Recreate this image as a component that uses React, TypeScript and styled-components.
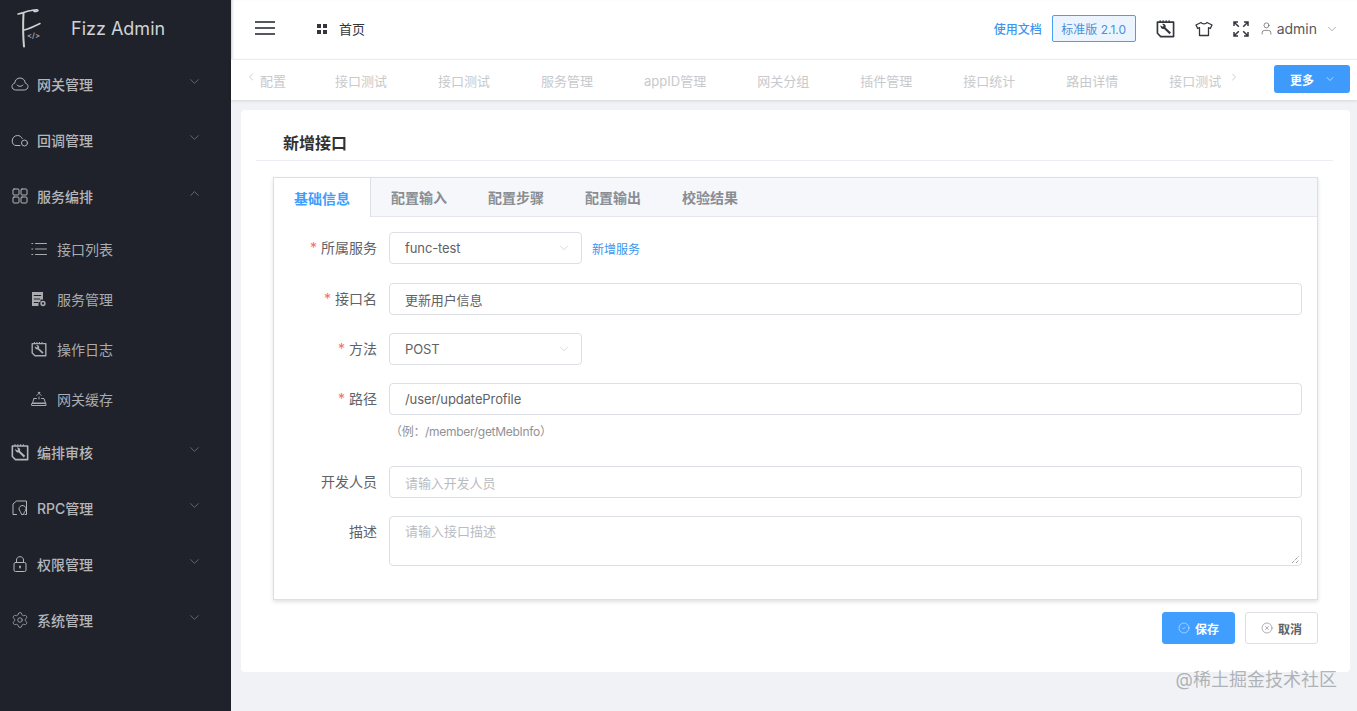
import React from 'react'
import styled, { createGlobalStyle } from 'styled-components'
import { ChevronDown, ChevronUp, ChevronLeft, ChevronRight, User, CircleCheck, CircleX, Settings } from 'lucide-react'

const GlobalStyle = createGlobalStyle`
  html, body { margin: 0; padding: 0; height: 100%; }
  body {
    font-family: Inter, "Noto Sans CJK SC", "Liberation Sans", sans-serif;
    font-size: 13px;
    color: #4a4d55;
    background: #f0f2f5;
  }
  * { box-sizing: border-box; }
`

const Shell = styled.div`
  display: flex;
  width: 1357px;
  height: 711px;
  overflow: hidden;
  position: relative;
`
const Sidebar = styled.aside`
  width: 231px;
  flex: none;
  background: #1f222a;
  color: #bfc1c5;
`
const Brand = styled.div`
  height: 56px;
  display: flex;
  align-items: center;
  padding-left: 17px;
  gap: 30px;
  font-size: 18px;
  color: #d0d2d5;
`
const MenuRow = styled.div`
  height: 56px;
  display: flex;
  align-items: center;
  padding-left: 11px;
  padding-right: 29px;
  gap: 8px;
  font-size: 14px;
  font-weight: 500;
  color: #b4b6ba;
  svg { flex: none; }
`
const MenuLabel = styled.span`
  flex: 1;
`
const SubRow = styled.div`
  height: 50px;
  display: flex;
  align-items: center;
  padding-left: 31px;
  gap: 10px;
  font-size: 14px;
  color: #a9abaf;
`
const MenuChevron = styled.span`
  display: flex;
  color: #8b8e94;
  margin-top: -6px;
`
const Main = styled.main`
  flex: 1;
  min-width: 0;
  display: flex;
  flex-direction: column;
`
const Header = styled.header`
  height: 60px;
  background: #fff;
  display: flex;
  align-items: center;
  padding: 0 18px 2px 24px;
  border-bottom: 1px solid #f0f1f3;
  box-shadow: inset 3px 0 3px -2px #c9cacc;
`
const Burger = styled.div`
  width: 20px;
  height: 14px;
  border-top: 2px solid #55585e;
  border-bottom: 2px solid #55585e;
  position: relative;
  margin: 0 42px 2px 0;
  &::after {
    content: '';
    position: absolute;
    left: 0;
    right: 0;
    top: 4px;
    height: 2px;
    background: #55585e;
  }
`
const HomeDots = styled.div`
  display: grid;
  grid-template-columns: 4px 4px;
  gap: 2px;
  margin-right: 12px;
  span { width: 4px; height: 4px; background: #33363c; }
`
const HomeText = styled.span`
  font-size: 13px;
  color: #33363c;
`
const HeaderRight = styled.div`
  margin-left: auto;
  display: flex;
  align-items: center;
`
const DocLink = styled.a`
  font-size: 12px;
  font-weight: 500;
  color: #3c95f0;
  margin-right: 10px;
`
const VersionTag = styled.div`
  width: 84px;
  height: 27px;
  border: 1px solid #4a9ff2;
  border-radius: 2px;
  background: #ecf5ff;
  color: #4a8fd8;
  font-size: 12px;
  display: flex;
  align-items: center;
  justify-content: center;
  margin-right: 20px;
`
const HeaderIcon = styled.span<{ $gap?: number }>`
  display: flex;
  color: #33363c;
  margin-right: ${p => p.$gap ?? 20}px;
`
const UserName = styled.span`
  font-size: 14px;
  color: #55585e;
  margin: 0 8px 0 3px;
`
const TabStrip = styled.div`
  height: 40px;
  background: #fff;
  display: flex;
  align-items: center;
  padding: 0 7px 0 14px;
  box-shadow: 0 1px 3px rgba(0, 0, 0, 0.12);
  position: relative;
`
const StripArrow = styled.span`
  display: flex;
  color: #9a9ca1;
  flex: none;
  margin-top: -6px;
`
const StripList = styled.div`
  display: flex;
  gap: 51px;
  width: 968px;
  margin-left: 3px;
  flex: none;
`
const StripItem = styled.span`
  font-size: 13px;
  color: #c8c9cc;
  white-space: nowrap;
  flex: none;
  &:first-child { margin-right: -2px; }
`
const MoreButton = styled.button`
  margin: 0 0 2px auto;
  width: 76px;
  height: 28px;
  border: none;
  border-radius: 3px;
  background: #3f9bfb;
  color: #fff;
  font: 600 12px Inter, "Noto Sans CJK SC", sans-serif;
  display: flex;
  align-items: center;
  justify-content: center;
  gap: 10px;
  padding: 0 0 0 2px;
`
const Content = styled.div`
  flex: 1;
  padding: 10px 7px 39px 10px;
`
const Card = styled.section`
  height: 562px;
  background: #fff;
  border-radius: 4px;
  padding: 0 17px 0 15px;
`
const CardTitle = styled.h2`
  margin: 0;
  height: 51px;
  padding: 23px 0 0 27px;
  font-size: 16px;
  line-height: 20px;
  font-weight: 600;
  color: #303133;
  border-bottom: 1px solid #ebeef5;
`
const TabCard = styled.div`
  margin: 16px 15px 0 17px;
  height: 423px;
  border: 1px solid #dcdfe6;
  box-shadow: 0 2px 4px rgba(0, 0, 0, 0.12);
  background: #fff;
`
const TabHead = styled.div`
  display: flex;
  height: 39px;
  background: #f5f7fa;
  border-bottom: 1px solid #e4e7ed;
`
const TabItem = styled.div<{ $active?: boolean }>`
  height: ${p => (p.$active ? '39px' : '38px')};
  padding: 0 20px;
  display: flex;
  align-items: center;
  font-size: 14px;
  font-weight: 600;
  color: ${p => (p.$active ? '#409eff' : '#8a8d92')};
  background: ${p => (p.$active ? '#fff' : 'transparent')};
  border-right: ${p => (p.$active ? '1px solid #dcdfe6' : 'none')};
  margin-right: ${p => (p.$active ? '0' : '1px')};
`
const Form = styled.div`
  padding: 15px 15px 0 0;
`
const Field = styled.div<{ $gap?: number }>`
  display: flex;
  align-items: flex-start;
  margin-bottom: ${p => p.$gap ?? 18}px;
`
const Label = styled.label<{ $required?: boolean }>`
  width: 115px;
  flex: none;
  padding-right: 12px;
  text-align: right;
  line-height: 32px;
  font-size: 14px;
  color: #5f6267;
  &::before {
    content: ${p => (p.$required ? "'*'" : 'none')};
    color: #f56c6c;
    margin-right: 4px;
  }
`
const Control = styled.div`
  flex: 1;
  min-width: 0;
`
const InputBox = styled.div<{ $small?: boolean }>`
  width: ${p => (p.$small ? '193px' : '100%')};
  height: 32px;
  border: 1px solid #dcdfe6;
  border-radius: 4px;
  display: flex;
  align-items: center;
  padding: 0 10px 0 15px;
  font-size: 13px;
  letter-spacing: -0.1px;
  color: #5f6267;
  background: #fff;
`
const Placeholder = styled.span`
  color: #b9bcc2;
`
const SelectRow = styled.div`
  display: flex;
  align-items: center;
  gap: 10px;
`
const SelectChevron = styled.span`
  margin-left: auto;
  display: flex;
  color: #bcbfc5;
`
const AddLink = styled.a`
  font-size: 12px;
  color: #3c95f0;
`
const Hint = styled.div`
  font-size: 12px;
  line-height: 16px;
  letter-spacing: -0.3px;
  color: #8f9297;
  margin-top: 9px;
  padding-left: 1px;
`
const TextArea = styled.div`
  width: 100%;
  height: 50px;
  border: 1px solid #dcdfe6;
  border-radius: 4px;
  padding: 6px 15px;
  font-size: 13px;
  line-height: 16px;
  position: relative;
`
const Resize = styled.svg`
  position: absolute;
  right: 1px;
  bottom: 1px;
`
const Actions = styled.div`
  display: flex;
  justify-content: flex-end;
  gap: 10px;
  margin: 12px 15px 0 0;
`
const ActionButton = styled.button<{ $primary?: boolean }>`
  width: 73px;
  height: 32px;
  border-radius: 3px;
  border: 1px solid ${p => (p.$primary ? '#409eff' : '#dcdfe6')};
  background: ${p => (p.$primary ? '#409eff' : '#fff')};
  color: ${p => (p.$primary ? '#fff' : '#606266')};
  font: 600 12px Inter, "Noto Sans CJK SC", sans-serif;
  display: flex;
  align-items: center;
  justify-content: center;
  gap: 5px;
  padding: 0;
`
const Watermark = styled.div`
  position: absolute;
  right: 20px;
  bottom: 20px;
  font-size: 18px;
  line-height: 22px;
  color: rgba(130, 134, 140, 0.6);
`

const Logo = () => (
  <svg width="24" height="40" viewBox="0 0 24 40" fill="none">
    <path d="M1 6C6 5 10 3 14 2.5C17 2 21 1 21 2.5C21 3.5 19 3.5 17 3.5" stroke="#d4d4d4" strokeWidth="1.5" strokeLinecap="round" />
    <path d="M6.5 5C6 15 6 28 7 38.5" stroke="#cfcfcf" strokeWidth="2" strokeLinecap="round" />
    <path d="M7 22C12 21 18 18 23 15.5" stroke="#cfcfcf" strokeWidth="1.6" strokeLinecap="round" />
    <text x="10" y="30" fontSize="7.5" fontWeight="600" fill="#a8a8a8" fontFamily="Inter, sans-serif">&lt;/&gt;</text>
  </svg>
)

const stroke = { fill: 'none', stroke: 'currentColor', strokeWidth: 1, strokeLinecap: 'round' as const, strokeLinejoin: 'round' as const }

const CloudSmile = () => (
  <svg width="18" height="18" viewBox="0 0 18 18" {...stroke}>
    <path d="M4.5 15C2.5 15 1 13.5 1 11.5C1 9.8 2.2 8.5 3.7 8.2C4 5 6.2 3 9 3C11.8 3 14 5 14.3 8.2C15.8 8.5 17 9.8 17 11.5C17 13.5 15.5 15 13.5 15Z" />
    <path d="M6 10C6.8 11.8 11.2 11.8 12 10" />
  </svg>
)
const CloudCircle = () => (
  <svg width="18" height="18" viewBox="0 0 18 18" {...stroke}>
    <path d="M9 14.5H5C2.8 14.5 1.2 12.6 1.2 10C1.2 7 3.4 4.5 6.5 4.5C8.6 4.5 10.4 5.6 11.2 7.5" />
    <circle cx="13.5" cy="12" r="3" />
  </svg>
)
const Grid = () => (
  <svg width="18" height="18" viewBox="0 0 18 18" {...stroke}>
    <rect x="2" y="2" width="6" height="6" rx="1" />
    <rect x="10" y="2" width="6" height="6" rx="1" />
    <rect x="2" y="10" width="6" height="6" rx="1" />
    <rect x="10" y="10" width="6" height="6" rx="1" />
  </svg>
)
const ListIcon = () => (
  <svg width="16" height="16" viewBox="0 0 16 16" {...stroke}>
    <path d="M4.5 2.5H15.5M4.5 8H15.5M4.5 13.5H15.5" />
    <path d="M0.8 2.5H1.8M0.8 8H1.8M0.8 13.5H1.8" />
  </svg>
)
const ServerDoc = () => (
  <svg width="16" height="16" viewBox="0 0 16 16">
    <path fill="currentColor" fillRule="evenodd" d="M1 1H12V8.5H9.5V11H7.5V15H1ZM2.8 4V5H10.2V4ZM2.8 7.5V8.5H9V7.5ZM2.8 11V12H7V11Z" />
    <circle cx="12" cy="12.5" r="1.9" fill="none" stroke="currentColor" strokeWidth="1.5" />
  </svg>
)
const ToolBoard = ({ size = 16 }: { size?: number }) => (
  <svg width={size} height={size} viewBox="0 0 16 16">
    <path d="M1.2 2.6H14.8V14.8H4L1.2 12Z" fill="none" stroke="currentColor" strokeWidth="1.4" strokeLinejoin="round" />
    <path d="M3.5 1V2.5M6 1V2.5M8.5 1V2.5M11 1V2.5" stroke="currentColor" strokeWidth="1" />
    <path d="M3.8 5.2L5.4 6.6L6.5 5.6L5.2 4.2C6.6 3.7 8.2 4.6 8.2 6.2L8 7.2L12.6 11.4L11.4 12.8L6.8 8.4C5.2 8.9 3.4 7.2 3.8 5.2Z" fill="currentColor" />
  </svg>
)
const RouterIcon = () => (
  <svg width="16" height="16" viewBox="0 0 16 16" {...stroke}>
    <path d="M3 7.5L1.5 12H14.5L13 7.5H10.5M5.5 7.5H3" />
    <rect x="1" y="12.5" width="14" height="2" />
    <path d="M5.5 4.5L8 2.5L10.5 4.5" strokeOpacity="0.7" />
    <path d="M8 6V8" />
    <circle cx="8" cy="1.8" r="0.7" fill="currentColor" />
  </svg>
)
const FileBulb = () => (
  <svg width="18" height="18" viewBox="0 0 18 18" {...stroke}>
    <path d="M5.5 15.5H2V5L5.5 2H15.5V15.5H14" />
    <path d="M11.5 6.5C9.5 6.5 8 8 8 9.8C8 11.5 10 13 10.5 15.5H12.5C13 13 15 11.5 15 9.8C15 8 13.5 6.5 11.5 6.5Z" />
  </svg>
)
const Padlock = () => (
  <svg width="18" height="18" viewBox="0 0 18 18" {...stroke}>
    <rect x="3" y="7.5" width="12" height="9" rx="1.5" />
    <path d="M5.5 7.5V5C5.5 3 7 1.7 9 1.7C11 1.7 12.5 3 12.5 5V7.5" />
    <path d="M9 11.3V12.7" strokeWidth="1.6" />
  </svg>
)
const Expand = () => (
  <svg width="16" height="16" viewBox="0 0 16 16" fill="none" stroke="currentColor" strokeWidth="1.5">
    <path d="M1 5V1H5M1.2 1.2L5.8 5.8" />
    <path d="M15 5V1H11M14.8 1.2L10.2 5.8" />
    <path d="M1 11V15H5M1.2 14.8L5.8 10.2" />
    <path d="M15 11V15H11M14.8 14.8L10.2 10.2" />
  </svg>
)
const TShirt = () => (
  <svg width="18" height="18" viewBox="0 0 18 18" fill="none" stroke="currentColor" strokeWidth="1.3" strokeLinejoin="round">
    <path d="M6 2.5C7 4.2 11 4.2 12 2.5L17 5L15.3 8.5L13.5 7.7V15.5H4.5V7.7L2.7 8.5L1 5Z" />
  </svg>
)

const Chevron = ({ up }: { up?: boolean }) => (
  <MenuChevron>{up ? <ChevronUp size={15} strokeWidth={1} /> : <ChevronDown size={15} strokeWidth={1} />}</MenuChevron>
)

const topMenus = [
  { label: '编排审核', icon: <ToolBoard size={18} /> },
  { label: 'RPC管理', icon: <FileBulb /> },
  { label: '权限管理', icon: <Padlock /> },
  { label: '系统管理', icon: <Settings size={18} strokeWidth={1} /> },
]
const subMenus = [
  { label: '接口列表', icon: <ListIcon /> },
  { label: '服务管理', icon: <ServerDoc /> },
  { label: '操作日志', icon: <ToolBoard /> },
  { label: '网关缓存', icon: <RouterIcon /> },
]
const stripTabs = ['配置', '接口测试', '接口测试', '服务管理', 'appID管理', '网关分组', '插件管理', '接口统计', '路由详情', '接口测试']
const formTabs = ['配置输入', '配置步骤', '配置输出', '校验结果']

export default function App() {
  return (
    <Shell>
      <GlobalStyle />
      <Sidebar>
        <Brand>
          <Logo />
          <span>Fizz Admin</span>
        </Brand>
        <MenuRow><CloudSmile /><MenuLabel>网关管理</MenuLabel><Chevron /></MenuRow>
        <MenuRow><CloudCircle /><MenuLabel>回调管理</MenuLabel><Chevron /></MenuRow>
        <MenuRow><Grid /><MenuLabel>服务编排</MenuLabel><Chevron up /></MenuRow>
        {subMenus.map(m => (
          <SubRow key={m.label}>{m.icon}<span>{m.label}</span></SubRow>
        ))}
        {topMenus.map(m => (
          <MenuRow key={m.label}>{m.icon}<MenuLabel>{m.label}</MenuLabel><Chevron /></MenuRow>
        ))}
      </Sidebar>
      <Main>
        <Header>
          <Burger />
          <HomeDots><span /><span /><span /><span /></HomeDots>
          <HomeText>首页</HomeText>
          <HeaderRight>
            <DocLink>使用文档</DocLink>
            <VersionTag>标准版 2.1.0</VersionTag>
            <HeaderIcon><ToolBoard size={19} /></HeaderIcon>
            <HeaderIcon><TShirt /></HeaderIcon>
            <HeaderIcon $gap={10}><Expand /></HeaderIcon>
            <User size={15} strokeWidth={1.2} color="#666" />
            <UserName>admin</UserName>
            <ChevronDown size={14} strokeWidth={1} color="#777" />
          </HeaderRight>
        </Header>
        <TabStrip>
          <StripArrow><ChevronLeft size={12} strokeWidth={1} /></StripArrow>
          <StripList>
            {stripTabs.map((t, i) => (
              <StripItem key={i}>{t}</StripItem>
            ))}
          </StripList>
          <StripArrow><ChevronRight size={12} strokeWidth={1} /></StripArrow>
          <MoreButton>更多<ChevronDown size={12} strokeWidth={1.2} /></MoreButton>
        </TabStrip>
        <Content>
          <Card>
            <CardTitle>新增接口</CardTitle>
            <TabCard>
              <TabHead>
                <TabItem $active>基础信息</TabItem>
                {formTabs.map(t => <TabItem key={t}>{t}</TabItem>)}
              </TabHead>
              <Form>
                <Field $gap={19}>
                  <Label $required>所属服务</Label>
                  <Control>
                    <SelectRow>
                      <InputBox $small>func-test<SelectChevron><ChevronDown size={14} strokeWidth={1} /></SelectChevron></InputBox>
                      <AddLink>新增服务</AddLink>
                    </SelectRow>
                  </Control>
                </Field>
                <Field>
                  <Label $required>接口名</Label>
                  <Control><InputBox>更新用户信息</InputBox></Control>
                </Field>
                <Field>
                  <Label $required>方法</Label>
                  <Control><InputBox $small>POST<SelectChevron><ChevronDown size={14} strokeWidth={1} /></SelectChevron></InputBox></Control>
                </Field>
                <Field $gap={26}>
                  <Label $required>路径</Label>
                  <Control>
                    <InputBox>/user/updateProfile</InputBox>
                    <Hint>（例：/member/getMebInfo）</Hint>
                  </Control>
                </Field>
                <Field>
                  <Label>开发人员</Label>
                  <Control><InputBox><Placeholder>请输入开发人员</Placeholder></InputBox></Control>
                </Field>
                <Field>
                  <Label>描述</Label>
                  <Control>
                    <TextArea>
                      <Placeholder>请输入接口描述</Placeholder>
                      <Resize width="9" height="9" viewBox="0 0 9 9"><path d="M1 8L8 1M5 8L8 5" stroke="#777" strokeWidth="1" strokeDasharray="1 1" /></Resize>
                    </TextArea>
                  </Control>
                </Field>
              </Form>
            </TabCard>
            <Actions>
              <ActionButton $primary><CircleCheck size={12} strokeWidth={1} />保存</ActionButton>
              <ActionButton><CircleX size={12} strokeWidth={1} />取消</ActionButton>
            </Actions>
          </Card>
        </Content>
      </Main>
      <Watermark>@稀土掘金技术社区</Watermark>
    </Shell>
  )
}
